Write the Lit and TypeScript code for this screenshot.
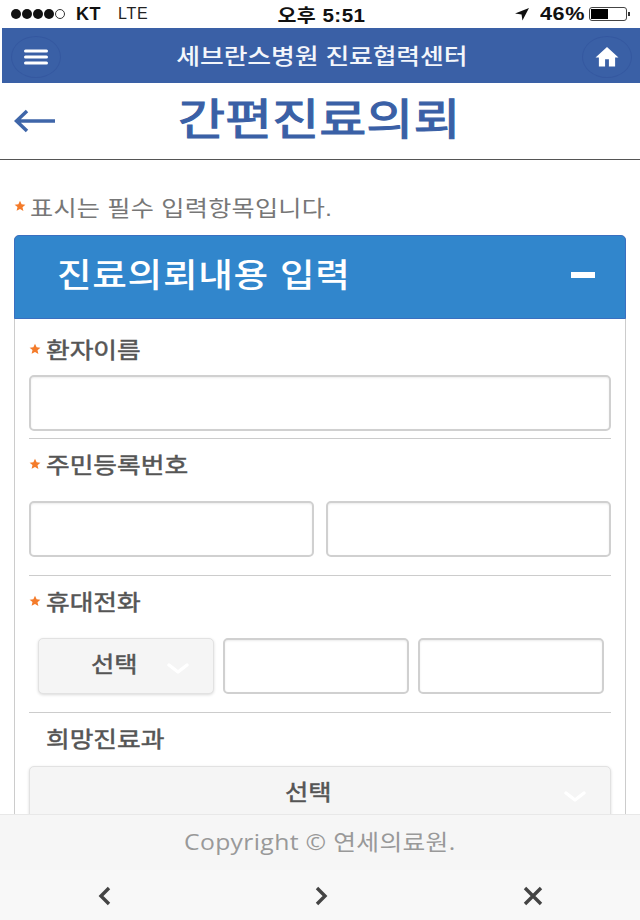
import { LitElement, html, css, svg } from "lit";
import { customElement } from "lit/decorators.js";

const star = html`<svg class="star" viewBox="0 0 12 12"><path d="M6 .8l1.6 3.5 3.8.4-2.9 2.5.9 3.8L6 8.9l-3.4 1.9.9-3.8L.6 4.7l3.8-.4z" fill="#f47b2a"/></svg>`;
const chevron = svg`<path d="M2 3l9 7 9-7" fill="none" stroke="#fff" stroke-width="3.4" stroke-linecap="round" stroke-linejoin="round"/>`;

@customElement("app-root")
export class AppRoot extends LitElement {
  // the reference is stretched sideways, so text runs get a scaleX of their own
  static styles = css`
    :host {
      display: block;
      position: relative;
      width: 640px;
      height: 920px;
      overflow: hidden;
      background: #fff;
      font-family: "Liberation Sans", "Noto Sans CJK KR", sans-serif;
      color: #444;
    }
    .status {
      height: 28px;
      display: grid;
      grid-template-columns: 1fr auto 1fr;
      align-items: center;
      padding: 0 9px 0 11px;
      color: #111;
      font-size: 18px;
    }
    .status .left, .status .right { display: flex; align-items: center; }
    .status .right { justify-content: flex-end; }
    .dots { display: flex; gap: 1px; margin-right: 11px; }
    .dots i { width: 10px; height: 10px; border-radius: 50%; background: #111; box-sizing: border-box; }
    .dots i.off { background: #fff; border: 1px solid #333; }
    .kt { font-weight: 700; letter-spacing: .5px; margin-right: 17px; }
    .lte { font-size: 16px; letter-spacing: .7px; color: #222; }
    .time { font-weight: 700; font-size: 18px; letter-spacing: .4px; transform: scaleX(1.145); }
    .pct {
      display: inline-block;
      width: 43px;
      font-weight: 700;
      margin: 0 6px 0 10px;
      letter-spacing: .5px;
      transform: scaleX(1.2);
      transform-origin: left;
    }
    .battery { display: block; }
    .bar {
      height: 55px;
      margin-left: 2px;
      background: #3a60a6;
      display: flex;
      align-items: center;
      justify-content: space-between;
      padding: 0 8px 0 9px;
      color: #fff;
    }
    .round {
      box-sizing: border-box;
      width: 50px;
      height: 42px;
      margin-top: 2px;
      border: 1px solid #3558a0;
      border-radius: 50%;
      display: flex;
      align-items: center;
      justify-content: center;
    }
    .bar h1 {
      margin: 0 0 3px;
      font-size: 22px;
      font-weight: 500;
      letter-spacing: -.1px;
      color: #f3f6fb;
      transform: scaleX(1.175);
    }
    .titlebar {
      height: 76px;
      border-bottom: 1px solid #555;
      display: flex;
      align-items: center;
      padding: 0 0 0 14px;
    }
    .titlebar svg { display: block; }
    .titlebar h2 {
      margin: 0 0 10px 122px;
      font-size: 43px;
      font-weight: 400;
      -webkit-text-stroke: 1.1px #3a60a6;
      color: #3a60a6;
      transform: scaleX(1.19);
      transform-origin: left;
    }
    .content { padding: 32px 14px 0; }
    .note {
      display: flex;
      align-items: center;
      gap: 4px;
      height: 28px;
      margin-bottom: 15px;
      font-size: 22px;
      color: #777;
    }
    .note span { letter-spacing: .2px; transform: scaleX(1.144); transform-origin: left; }
    .star { width: 12px; height: 12px; flex: none; }
    .panel {
      border: 1px solid #ccc;
      border-top: none;
      border-radius: 5px 5px 0 0;
    }
    .panel-head {
      margin: 0 -1px;
      height: 84px;
      box-sizing: border-box;
      background: #3186cc;
      border: 1px solid #3a6fc0;
      border-radius: 5px 5px 0 0;
      display: flex;
      align-items: center;
      justify-content: space-between;
      padding: 0 30px 8px 42px;
      color: #fff;
      font-size: 33px;
      font-weight: 500;
    }
    .panel-head span:first-child { letter-spacing: .6px; transform: scaleX(1.14); transform-origin: left; }
    .minus { width: 24px; height: 6px; background: #fff; margin-top: 4px; }
    .panel-body { padding: 15px 14px 0; }
    .label {
      display: flex;
      align-items: center;
      gap: 5px;
      height: 30px;
      font-size: 22px;
      color: #555;
    }
    .label span {
      margin-bottom: 2px;
      -webkit-text-stroke: .5px #555;
      transform: scaleX(1.17);
      transform-origin: left;
    }
    .label.plain { padding-left: 17px; }
    .row { display: flex; }
    input {
      display: block;
      box-sizing: border-box;
      height: 56px;
      flex: 1;
      min-width: 0;
      width: 100%;
      border: 2px solid #d0d0d0;
      border-radius: 5px;
      background: #fff;
      box-shadow: inset 0 1px 2px rgba(0,0,0,.08);
      outline: none;
    }
    .sel {
      box-sizing: border-box;
      height: 56px;
      background: #f5f5f5;
      border: 1px solid #e2e2e2;
      border-radius: 5px;
      box-shadow: 0 1px 3px rgba(0,0,0,.15);
      display: flex;
      align-items: center;
      justify-content: center;
      position: relative;
      font-size: 22px;
      color: #555;
    }
    .sel span {
      margin-bottom: 9px;
      -webkit-text-stroke: .5px #555;
      transform: scaleX(1.15);
    }
    .sel svg { position: absolute; right: 24px; top: 23px; }
    .sep { height: 1px; background: #ccc; }
    .sep.tight { margin-top: 7px; }
    .sep.wide { margin-top: 18px; }
    .label.after { margin-top: 10px; }
    .one { margin-top: 11px; }
    .pair { margin-top: 22px; gap: 12px; }
    .phone { margin-top: 22px; padding: 0 7px 0 9px; gap: 9px; }
    .phone .sel { flex: none; width: 176px; padding-right: 24px; }
    .full { margin-top: 13px; padding-right: 24px; }
    .footer {
      position: absolute;
      left: 0;
      right: 0;
      top: 814px;
      height: 56px;
      background: #f6f6f6;
      border-top: 1px solid #e8e8e8;
      box-sizing: border-box;
      display: flex;
      align-items: center;
      justify-content: center;
      font-size: 22px;
      font-family: "Open Sans", "Noto Sans CJK KR", sans-serif;
      color: #999;
      padding-bottom: 6px;
    }
    .footer span { letter-spacing: .3px; transform: scaleX(1.124); }
    .nav {
      position: absolute;
      left: 0;
      right: 0;
      top: 870px;
      height: 50px;
      background: #f8f8f8;
    }
    .nav svg { position: absolute; top: 16px; }
    .nav .back { left: 97px; }
    .nav .forward { left: 313px; }
    .nav .close { left: 522px; }
  `;

  render() {
    return html`
      <div class="status">
        <div class="left">
          <span class="dots"><i></i><i></i><i></i><i></i><i class="off"></i></span>
          <span class="kt">KT</span><span class="lte">LTE</span>
        </div>
        <div class="time">오후 5:51</div>
        <div class="right">
          <svg width="16" height="14" viewBox="0 0 18 16"><path d="M17 1L1 7.5l7.5 1 1 7z" fill="#111"/></svg>
          <span class="pct">46%</span>
          <svg class="battery" width="42" height="14" viewBox="0 0 42 14">
            <rect x=".5" y=".5" width="37" height="13" rx="2.5" fill="#fff" stroke="#444"/>
            <rect x="2" y="2" width="17" height="10" fill="#000"/>
            <rect x="39" y="5" width="2" height="4" fill="#333"/>
          </svg>
        </div>
      </div>

      <div class="bar">
        <div class="round">
          <svg width="24" height="18" viewBox="0 0 24 18"><path d="M1.500 3h21M1.500 9h21M1.500 15h21" stroke="#fff" stroke-width="3" stroke-linecap="round"/></svg>
        </div>
        <h1>세브란스병원 진료협력센터</h1>
        <div class="round">
          <svg width="24" height="21" viewBox="0 0 24 22"><path d="M12 1L0 12h3.500v9.500H10V14h4v7.500h6.500V12H24z" fill="#fff"/></svg>
        </div>
      </div>

      <div class="titlebar">
        <svg width="42" height="24" viewBox="0 0 42 24"><path d="M41 12H3M13 2L2.500 12 13 22" fill="none" stroke="#3f66a9" stroke-width="3.500"/></svg>
        <h2>간편진료의뢰</h2>
      </div>

      <div class="content">
        <div class="note">${star}<span>표시는 필수 입력항목입니다.</span></div>
        <div class="panel">
          <div class="panel-head"><span>진료의뢰내용 입력</span><span class="minus"></span></div>
          <div class="panel-body">
            <div class="label">${star}<span>환자이름</span></div>
            <div class="row one"><input /></div>
            <div class="sep tight"></div>
            <div class="label after">${star}<span>주민등록번호</span></div>
            <div class="row pair"><input /><input /></div>
            <div class="sep wide"></div>
            <div class="label after">${star}<span>휴대전화</span></div>
            <div class="row phone">
              <div class="sel"><span>선택</span><svg width="22" height="13" viewBox="0 0 22 13">${chevron}</svg></div>
              <input /><input />
            </div>
            <div class="sep wide"></div>
            <div class="label plain after"><span>희망진료과</span></div>
            <div class="sel full"><span>선택</span><svg width="22" height="13" viewBox="0 0 22 13">${chevron}</svg></div>
          </div>
        </div>
      </div>

      <div class="footer"><span>Copyright © 연세의료원.</span></div>
      <div class="nav">
        <svg class="back" width="16" height="20" viewBox="0 0 16 20"><path d="M12 2L4 10l8 8" fill="none" stroke="#444" stroke-width="3.400"/></svg>
        <svg class="forward" width="16" height="20" viewBox="0 0 16 20"><path d="M4 2l8 8-8 8" fill="none" stroke="#444" stroke-width="3.400"/></svg>
        <svg class="close" width="22" height="20" viewBox="0 0 22 20"><path d="M3 2l16 16M19 2L3 18" fill="none" stroke="#444" stroke-width="3.400"/></svg>
      </div>
    `;
  }
}
